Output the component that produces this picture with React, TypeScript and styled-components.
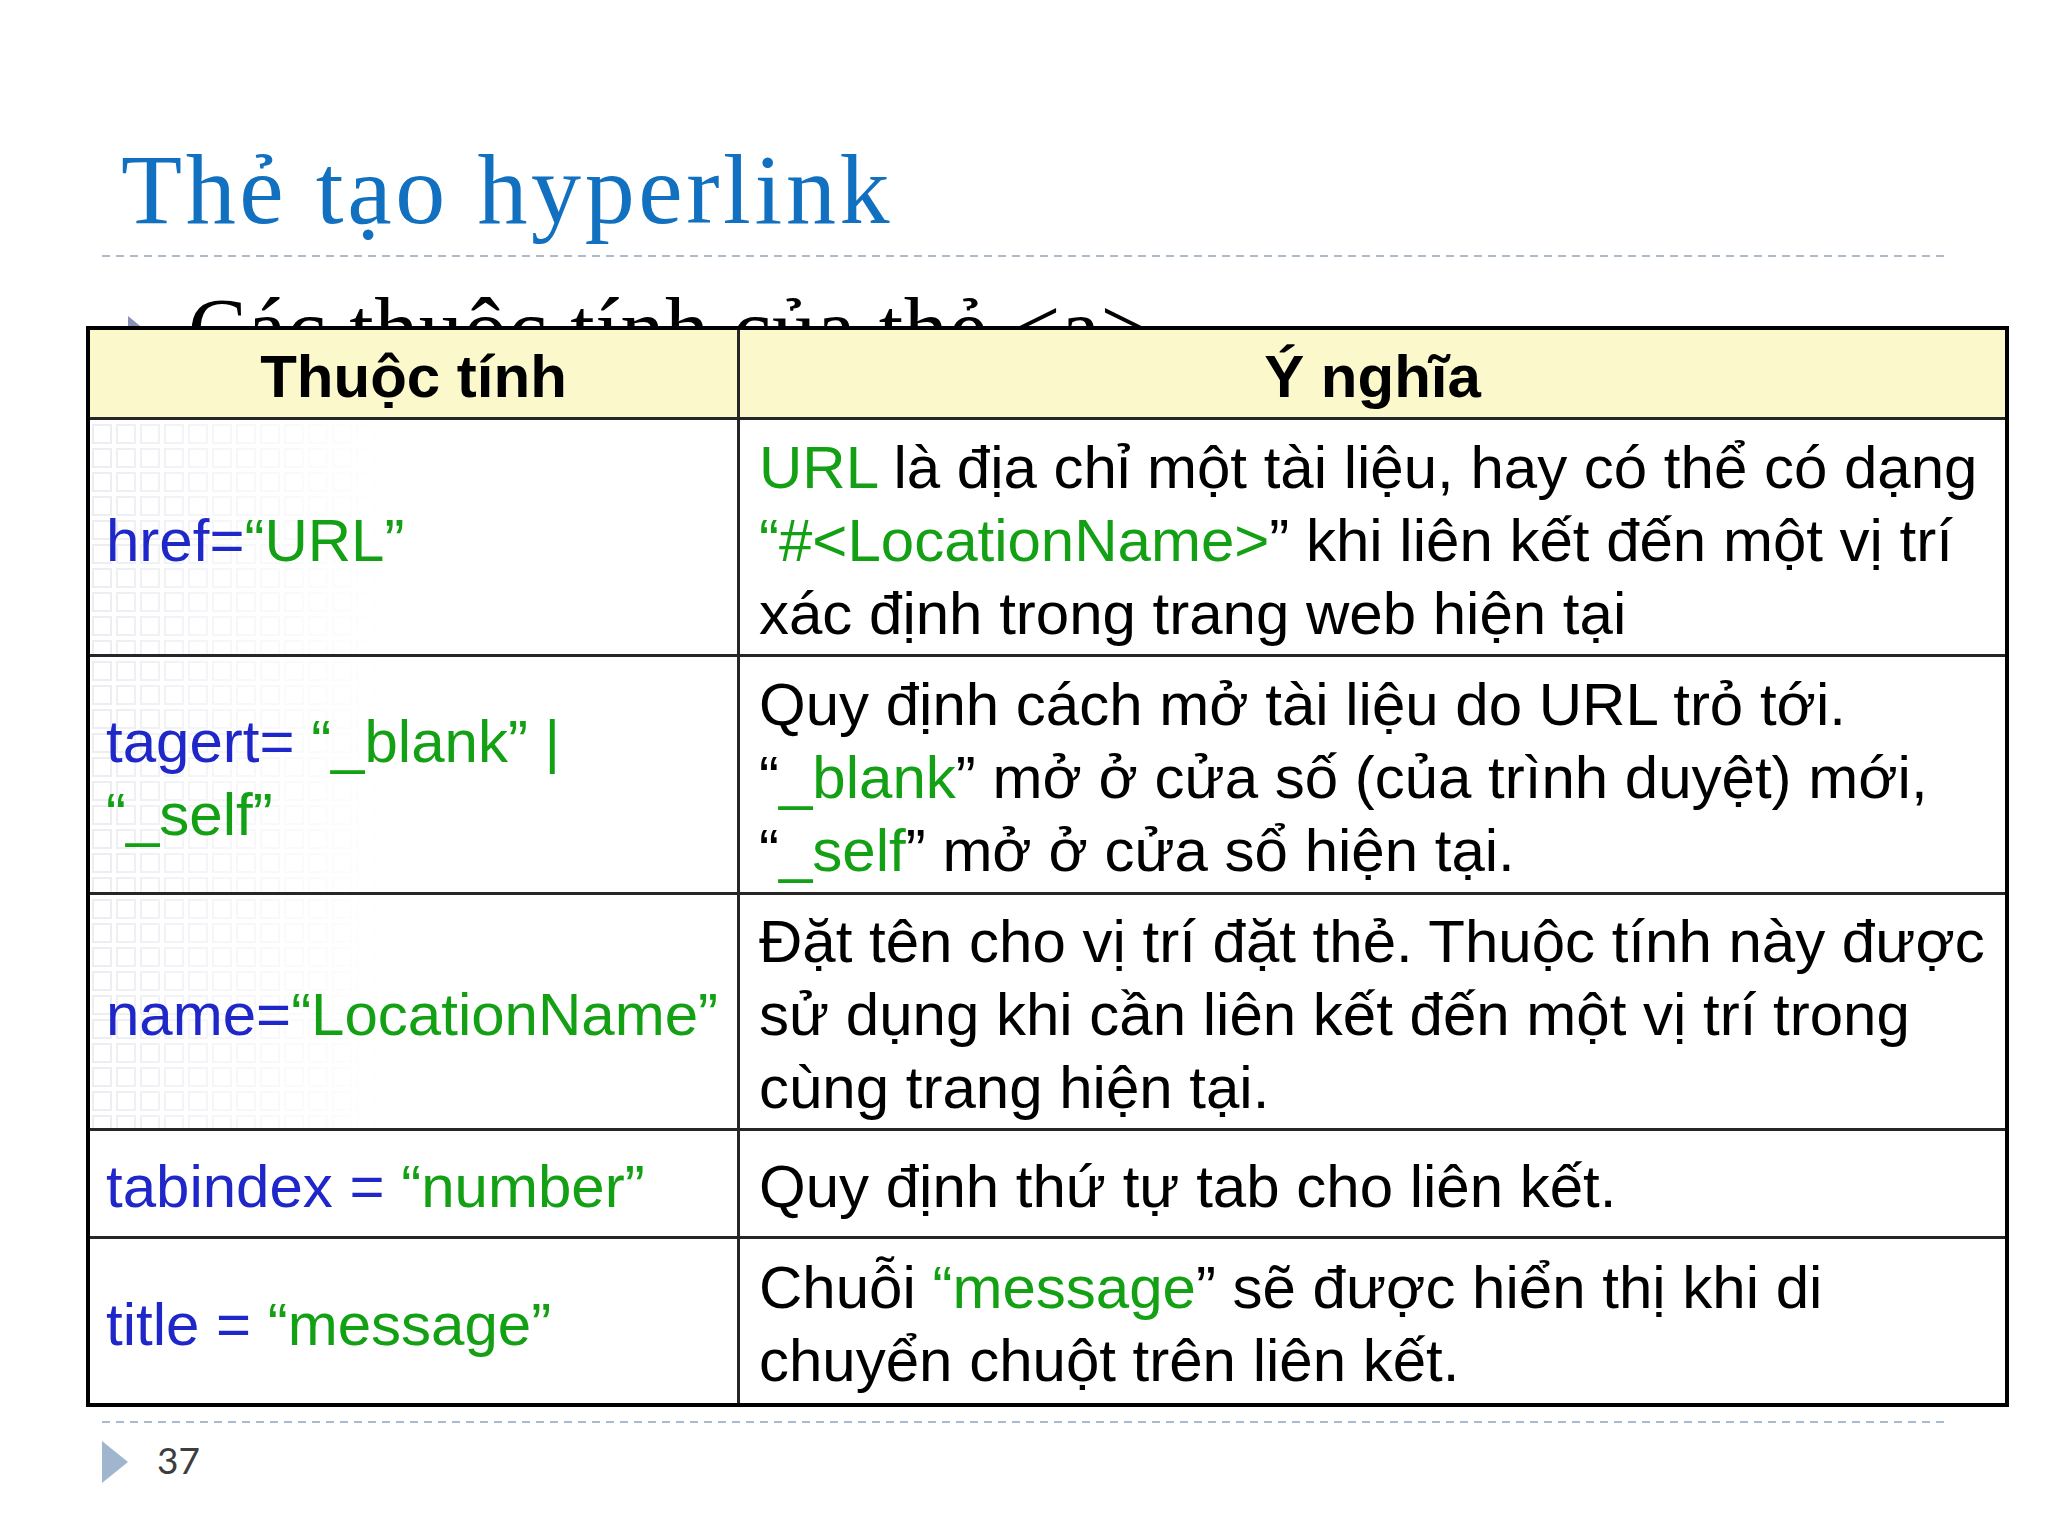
import React from "react";
import styled, { createGlobalStyle } from "styled-components";

const GlobalStyle = createGlobalStyle`
  html, body {
    margin: 0;
    padding: 0;
    background: #ffffff;
  }
  body {
    width: 2048px;
    height: 1536px;
    overflow: hidden;
  }
`;

const Slide = styled.div`
  width: 2048px;
  height: 1536px;
  background: #ffffff;
  display: flex;
  flex-direction: column;
  overflow: hidden;
`;

const Title = styled.h1`
  margin: 140px 0 0 121px;
  height: 100px;
  font-family: "Liberation Serif", "Times New Roman", serif;
  font-weight: 400;
  font-size: 100px;
  line-height: 100px;
  letter-spacing: 3.6px;
  color: #1170c0;
  white-space: nowrap;
`;

const Rule = styled.div<{ $top: number }>`
  flex-shrink: 0;
  margin: ${(p) => p.$top}px 102px 0 102px;
  height: 2px;
  background: repeating-linear-gradient(
    to right,
    #a9bbcd 0 8px,
    transparent 8px 14px
  );
`;

const Body = styled.div`
  margin: 29px 0 0 86px;
  display: grid;
  grid-template-columns: 1923px;
  grid-template-rows: 40px auto;
`;

const Bullet = styled.div`
  grid-row: 1 / 3;
  grid-column: 1;
  align-self: start;
  display: flex;
  align-items: center;
  gap: 43px;
  margin-left: 42px;
  height: 88px;
  font-family: "Liberation Serif", "Times New Roman", serif;
  font-size: 88px;
  line-height: 88px;
  letter-spacing: 0.6px;
  color: #000000;
  white-space: nowrap;
`;

const BulletMark = styled.span`
  width: 0;
  height: 0;
  border-top: 14px solid transparent;
  border-bottom: 14px solid transparent;
  border-left: 17px solid #8891b6;
`;

const Table = styled.div`
  grid-row: 2;
  grid-column: 1;
  position: relative;
  z-index: 1;
  box-sizing: border-box;
  width: 1923px;
  height: 1081px;
  display: grid;
  grid-template-columns: 650px 1fr;
  grid-template-rows: 90px 237px 238px 236px 108px 164px;
  border: 4px solid #000000;
  background: #ffffff;
`;

const Cell = styled.div<{
  $head?: boolean;
  $second?: boolean;
  $lastRow?: boolean;
  $pattern?: boolean;
}>`
  position: relative;
  overflow: hidden;
  box-sizing: border-box;
  display: flex;
  flex-direction: column;
  justify-content: center;
  align-items: ${(p) => (p.$head ? "center" : "flex-start")};
  padding: ${(p) =>
    p.$head ? "5px 0 0 0" : p.$second ? "6px 0 0 19px" : "6px 0 0 16px"};
  border-right: ${(p) => (p.$second ? "none" : "3px solid #262626")};
  border-bottom: ${(p) => (p.$lastRow ? "none" : "3px solid #262626")};
  background: ${(p) => (p.$head ? "#fbf9cb" : "#ffffff")};
  font-family: "Liberation Sans", Arial, sans-serif;
  font-weight: ${(p) => (p.$head ? 700 : 400)};
  font-size: 60px;
  line-height: 73px;
  color: #000000;
  white-space: nowrap;

  &::before {
    content: "";
    display: ${(p) => (p.$pattern ? "block" : "none")};
    position: absolute;
    inset: 0;
    background-image:
      linear-gradient(to bottom, transparent 20px, #ffffff 20px),
      linear-gradient(to right, transparent 20px, #ffffff 20px),
      linear-gradient(
        to right,
        #e6e8ee 2px,
        transparent 2px 18px,
        #e6e8ee 18px 20px,
        transparent 20px
      ),
      linear-gradient(
        to bottom,
        #e6e8ee 2px,
        transparent 2px 18px,
        #e6e8ee 18px 20px,
        transparent 20px
      );
    background-size: 24px 24px;
    background-position: 2px 4px;
    -webkit-mask-image: linear-gradient(
      to right,
      rgba(0, 0, 0, 0.8) 0,
      rgba(0, 0, 0, 0.35) 140px,
      transparent 300px
    );
    mask-image: linear-gradient(
      to right,
      rgba(0, 0, 0, 0.8) 0,
      rgba(0, 0, 0, 0.35) 140px,
      transparent 300px
    );
  }
`;

const Line = styled.div`
  position: relative;
  z-index: 1;
`;

const Attr = styled.span`
  color: #1f27c9;
`;

const Val = styled.span`
  color: #14a014;
`;

const Footer = styled.div`
  margin: 18px 0 0 102px;
  display: flex;
  align-items: center;
  gap: 29px;
`;

const FooterMark = styled.span`
  width: 0;
  height: 0;
  border-top: 21px solid transparent;
  border-bottom: 21px solid transparent;
  border-left: 26px solid #a0b6ce;
`;

const PageNum = styled.span`
  font-family: Lato, "Open Sans", sans-serif;
  font-size: 37px;
  line-height: 1;
  color: #3d3d3d;
  margin-top: -6px;
`;

export default function App() {
  return (
    <>
      <GlobalStyle />
      <Slide>
        <Title>Thẻ tạo hyperlink</Title>
        <Rule $top={15} />
        <Body>
          <Bullet>
            <BulletMark />
            <span>Các thuộc tính của thẻ &lt;a&gt;</span>
          </Bullet>
          <Table>
            <Cell $head>Thuộc tính</Cell>
            <Cell $head $second>
              Ý nghĩa
            </Cell>

            <Cell $pattern>
              <Line>
                <Attr>href=</Attr>
                <Val>“URL”</Val>
              </Line>
            </Cell>
            <Cell $second>
              <Line>
                <Val>URL</Val> là địa chỉ một tài liệu, hay có thể có dạng
              </Line>
              <Line>
                <Val>“#&lt;LocationName&gt;</Val>” khi liên kết đến một vị trí
              </Line>
              <Line>xác định trong trang web hiện tại</Line>
            </Cell>

            <Cell $pattern>
              <Line>
                <Attr>tagert= </Attr>
                <Val>“_blank” |</Val>
              </Line>
              <Line>
                <Val>“_self”</Val>
              </Line>
            </Cell>
            <Cell $second>
              <Line>Quy định cách mở tài liệu do URL trỏ tới.</Line>
              <Line>
                “<Val>_blank</Val>” mở ở cửa số (của trình duyệt) mới,
              </Line>
              <Line>
                “<Val>_self</Val>” mở ở cửa sổ hiện tại.
              </Line>
            </Cell>

            <Cell $pattern>
              <Line>
                <Attr>name=</Attr>
                <Val>“LocationName”</Val>
              </Line>
            </Cell>
            <Cell $second>
              <Line>Đặt tên cho vị trí đặt thẻ. Thuộc tính này được</Line>
              <Line>sử dụng khi cần liên kết đến một vị trí trong</Line>
              <Line>cùng trang hiện tại.</Line>
            </Cell>

            <Cell>
              <Line>
                <Attr>tabindex = </Attr>
                <Val>“number”</Val>
              </Line>
            </Cell>
            <Cell $second>
              <Line>Quy định thứ tự tab cho liên kết.</Line>
            </Cell>

            <Cell $lastRow>
              <Line>
                <Attr>title = </Attr>
                <Val>“message”</Val>
              </Line>
            </Cell>
            <Cell $second $lastRow>
              <Line>
                Chuỗi <Val>“message</Val>” sẽ được hiển thị khi di
              </Line>
              <Line>chuyển chuột trên liên kết.</Line>
            </Cell>
          </Table>
        </Body>
        <Rule $top={14} />
        <Footer>
          <FooterMark />
          <PageNum>37</PageNum>
        </Footer>
      </Slide>
    </>
  );
}
